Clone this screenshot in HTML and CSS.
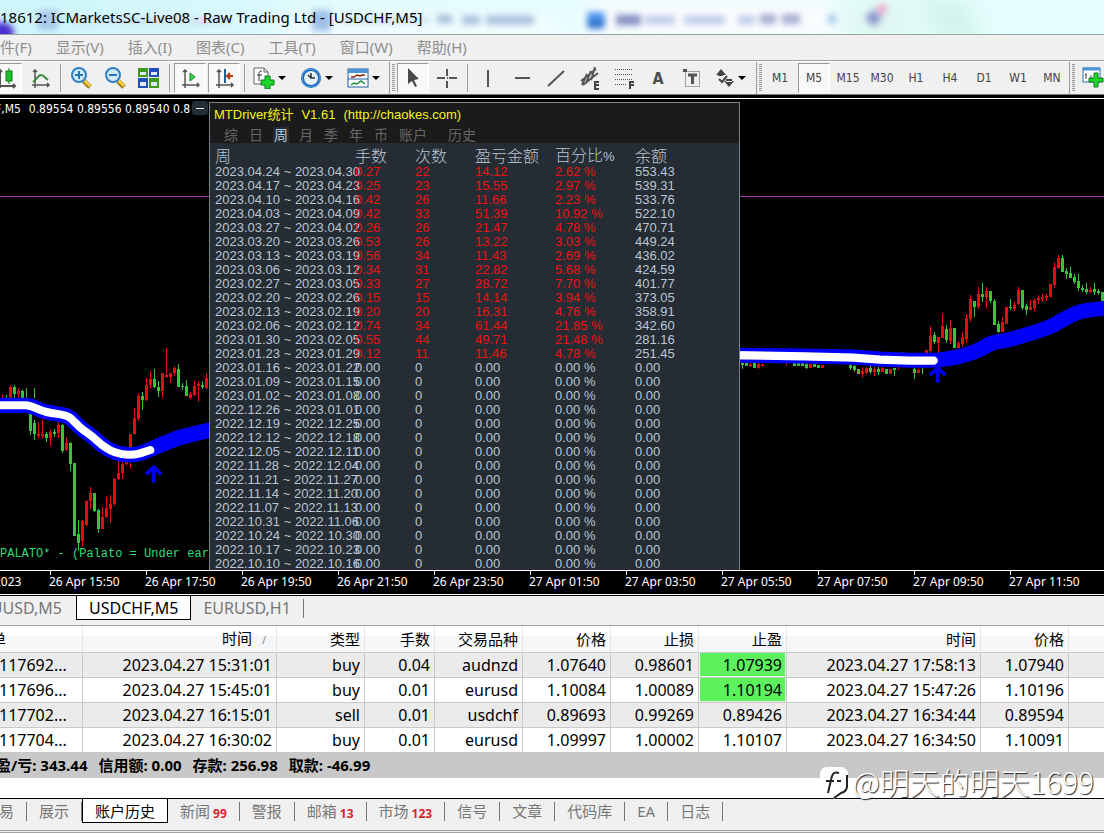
FILE: index.html
```html
<!DOCTYPE html>
<html lang="zh-CN">
<head>
<meta charset="utf-8">
<title>ICMarketsSC-Live08 - [USDCHF,M5]</title>
<link rel="stylesheet" href="styles.css">
</head>
<body>
<header class="titlebar">
  <svg class="titlebar-glass" aria-hidden="true">
    <defs>
      <filter id="soft"><feGaussianBlur stdDeviation="3"/></filter>
      <filter id="softer"><feGaussianBlur stdDeviation="12"/></filter>
    </defs>
    <g filter="url(#softer)">
      <rect x="585" y="0" width="250" height="40" fill="#fdfcfe"/>
      <rect x="850" y="0" width="60" height="40" fill="#dff5f0"/>
      <path d="M915 0H960L985 40H940Z" fill="#d2f0e9"/>
      <rect x="280" y="14" width="290" height="30" fill="#f2fdff"/>
    </g>
    <g filter="url(#soft)">
      <circle cx="2" cy="34" r="12" fill="#4a2fd0"/>
      <rect x="38" y="10" width="20" height="20" fill="#a9c8ec"/>
      <rect x="312" y="10" width="19" height="21" fill="#9dbfe8"/>
      <path d="M70 21H230M340 20H430" stroke="#cbdff0" stroke-width="6"/>
      <path d="M437 19H452M462 20H480M486 20H534" stroke="#a9c0dc" stroke-width="9"/>
      <rect x="587" y="12" width="18" height="17" rx="3" fill="#4c94ee"/>
      <path d="M588 24H604" stroke="#2a5fb4" stroke-width="5"/>
      <path d="M616 20H641" stroke="#8894c4" stroke-width="11"/>
      <path d="M645 20H675M684 20H725M738 20H755" stroke="#c0cdea" stroke-width="9"/>
      <path d="M760 19H776M782 19H800" stroke="#a4aed2" stroke-width="10"/>
      <circle cx="832" cy="19" r="5" fill="#a5cdea"/>
      <path d="M873 9L883 18L873 27L865 18Z" fill="#8c9ad0"/>
      <circle cx="882" cy="9" r="5" fill="#f0a5cc"/>
    </g>
  </svg>
  <h1 class="titlebar-text">18612: ICMarketsSC-Live08 - Raw Trading Ltd - [USDCHF,M5]</h1>
</header>

<nav class="menu">
  <button>件(F)</button><button>显示(V)</button><button>插入(I)</button><button>图表(C)</button><button>工具(T)</button><button>窗口(W)</button><button>帮助(H)</button>
</nav>

<div class="toolbar">
  <div class="group first">
    <button class="tool on" aria-label="蜡烛图"><svg width="22" height="22"><g fill="none" stroke="#555" stroke-width="2"><path d="M5 3V21M2 19H20M3 5L5 3L7 5M18 17L20 19L18 21"/></g><path d="M14 1V17" stroke="#0a6a10" stroke-width="1"/><rect x="11" y="4" width="6" height="10" fill="#19c22c" stroke="#0a7a18"/></svg></button>
    <button class="tool" aria-label="折线图"><svg width="22" height="22"><g fill="none" stroke="#555" stroke-width="1.500"><path d="M6 3V21M3 18H20M4 5L6 3L8 5M18 16L20 18L18 20"/></g><path d="M4 15C8 12 9 8 12 8S16 11 19 13" fill="none" stroke="#3c8a3c" stroke-width="2"/></svg></button>
    <i class="sep"></i>
    <button class="tool" aria-label="放大"><svg width="22" height="22"><path d="M14 14L20 20" stroke="#a07a10" stroke-width="5"/><path d="M14 13L20 19" stroke="#f2cf4a" stroke-width="3"/><circle cx="9" cy="8" r="7" fill="#cfeafa" stroke="#2f7fc4" stroke-width="2"/><path d="M5 8H13M9 4V12" stroke="#2277b4" stroke-width="2"/></svg></button>
    <button class="tool" aria-label="缩小"><svg width="22" height="22"><path d="M14 14L20 20" stroke="#a07a10" stroke-width="5"/><path d="M14 13L20 19" stroke="#f2cf4a" stroke-width="3"/><circle cx="9" cy="8" r="7" fill="#cfeafa" stroke="#2f7fc4" stroke-width="2"/><path d="M5 8H13" stroke="#2277b4" stroke-width="2"/></svg></button>
    <button class="tool" aria-label="平铺窗口"><svg width="22" height="22"><path d="M0 1H10V10H0ZM11 11H21V21H11Z" fill="#3f9a1c"/><path d="M11 1H21V10H11ZM0 11H10V21H0Z" fill="#2350b8"/><path d="M2 5H8V8H2ZM13 5H19V8H13ZM2 15H8V19H2ZM13 15H19V19H13Z" fill="#dfe9fb"/></svg></button>
    <i class="sep"></i>
    <button class="tool on" aria-label="自动滚动"><svg width="22" height="22"><g fill="none" stroke="#555" stroke-width="1.500"><path d="M6 3V21M3 18H20M4 5L6 3L8 5M18 16L20 18L18 20"/></g><path d="M11 6L16 10L11 14Z" fill="#3fd04a" stroke="#148a20"/></svg></button>
    <button class="tool on" aria-label="图表平移"><svg width="22" height="22"><g fill="none" stroke="#555" stroke-width="1.500"><path d="M6 3V21M3 18H20M4 5L6 3L8 5M18 16L20 18L18 20"/></g><path d="M12 2V16" stroke="#1d5f96" stroke-width="2"/><path d="M14 9H20M17 6L14 9L17 12" fill="none" stroke="#b03a10" stroke-width="2"/></svg></button>
    <i class="sep"></i>
    <button class="tool drop" aria-label="指标列表"><svg width="23" height="22"><path d="M1 1H11L15 5V17H1Z" fill="#fff" stroke="#666"/><path d="M11 1V5H15" fill="none" stroke="#666"/><path d="M9 4C6 4 6 5 6 8V14M4 8H9" fill="none" stroke="#333"/><path d="M12 9H17V13H21V18H17V22H12V18H8V13H12Z" fill="#1fd42c" stroke="#0a7d16"/></svg><b class="caret"></b></button>
    <button class="tool drop" aria-label="时间周期"><svg width="23" height="22"><circle cx="11" cy="11" r="10" fill="#1e68b8"/><circle cx="11" cy="11" r="9" fill="none" stroke="#4ea0e4"/><circle cx="11" cy="11" r="7" fill="#e6f3fd"/><path d="M11 6V11H15M11 11L8 8" fill="none" stroke="#333" stroke-width="1.500"/></svg><b class="caret"></b></button>
    <button class="tool drop" aria-label="模板"><svg width="23" height="22"><rect x="1" y="2" width="20" height="18" fill="#fff" stroke="#1f5da0"/><path d="M1 4H21" stroke="#4c94d8" stroke-width="4"/><path d="M1 12H21" stroke="#1f5da0"/><path d="M4 10H7L10 8L13 9L15 8H18" fill="none" stroke="#8a2010" stroke-width="1.500"/><path d="M4 18L7 16L10 17L14 14L18 17" fill="none" stroke="#1b8a3a" stroke-width="1.500"/></svg><b class="caret"></b></button>
  </div>
  <div class="group">
    <i class="grip"></i>
    <button class="tool on" aria-label="光标"><svg width="22" height="22"><path d="M6 1V17L10 14L13 20L15 19L12 13L17 12Z" fill="#4a4a4a"/></svg></button>
    <button class="tool" aria-label="十字准线"><svg width="22" height="22"><path d="M11 2V9M11 14V21M1 11H9M13 11H21M11 11H12" stroke="#555" stroke-width="2"/></svg></button>
    <i class="sep"></i>
    <button class="tool" aria-label="垂直线"><svg width="22" height="22"><path d="M11 3V20" stroke="#555" stroke-width="2"/></svg></button>
    <button class="tool" aria-label="水平线"><svg width="22" height="22"><path d="M4 11H19" stroke="#555" stroke-width="2"/></svg></button>
    <button class="tool" aria-label="趋势线"><svg width="22" height="22"><path d="M3 19L19 4" stroke="#555" stroke-width="2"/></svg></button>
    <button class="tool" aria-label="等距通道"><svg width="22" height="24"><path d="M2 15L17 3M4 19L19 7M3 19L8 8M7 17L12 5M12 14L16 1" stroke="#555" stroke-width="2"/><path d="M20 16H16V23H20M16 19H20" fill="none" stroke="#444" stroke-width="2"/></svg></button>
    <button class="tool" aria-label="斐波纳契"><svg width="22" height="24"><path d="M2 3H20M2 8H20M2 13H20M2 18H14" stroke="#555" stroke-width="1" stroke-dasharray="1 1" transform="translate(0 .5)"/><path d="M21 16H17V23M17 19H21" fill="none" stroke="#444" stroke-width="2"/></svg></button>
    <button class="tool letter">A</button>
    <button class="tool" aria-label="文本标签"><svg width="22" height="22"><rect x="4.500" y="4.500" width="14" height="15" fill="none" stroke="#555" stroke-dasharray="1 1"/><path d="M2 2H6V5H2Z" fill="#555"/><path d="M7 8H16M11.500 8V17" stroke="#555" stroke-width="3"/></svg></button>
    <button class="tool drop" aria-label="箭头"><svg width="22" height="22"><path d="M7 2L12 8H2ZM4 7H9V9H4Z M15 20L20 14H10ZM12 12H18V15H12Z" fill="#444"/><path d="M5 12L8 15L13 9" fill="none" stroke="#444" stroke-width="2"/></svg><b class="caret"></b></button>
  </div>
  <div class="group frames">
    <i class="grip"></i>
    <button class="tool">M1</button><button class="tool on">M5</button><button class="tool">M15</button><button class="tool">M30</button><button class="tool">H1</button><button class="tool">H4</button><button class="tool">D1</button><button class="tool">W1</button><button class="tool">MN</button>
  </div>
  <div class="group last">
    <i class="grip"></i>
    <button class="tool" aria-label="新订单"><svg width="22" height="22"><rect x="1" y="1" width="17" height="14" fill="#fff" stroke="#2a6cb4"/><path d="M1 2H18" stroke="#4c94d8" stroke-width="3"/><path d="M4 6V12M3 8H5M9 8V12" stroke="#456"/><path d="M12 6H16V11H21V15H16V20H12V15H7V11H12Z" fill="#1fd42c" stroke="#0a7d16"/></svg></button>
  </div>
</div>

<main class="chart">
  <div class="plot">
    <svg class="candles" aria-hidden="true">
      <path d="M0 97.500H4000" stroke="#a632a6"/>
      <g transform="translate(0 236) scale(.33333)" fill="none" shape-rendering="crispEdges">
        <g stroke="#3fbf3f">
          <path stroke-width="3" d="M19 180V190M43 150V190M67 165V190M79 160V190M103 160V190M91 237V300M103 255V315M139 290V322M163 282V307M187 268V355M211 320V407M223 383V602M235 555V648M283 474V530M295 523V594M427 171V225M463 102V158M475 137V185M535 88V157M547 145V165M559 135V183M607 137V163"/>
          <path stroke-width="9" d="M43 155V178M67 167V190M91 237V288M103 265V297M139 296V308M163 290V296M187 270V348M211 323V387M223 383V602M235 597V623M283 474V527M295 525V582M427 183V195M463 133V155M475 155V168M535 101V155M547 152V157M559 153V182M607 149V155"/>
        </g>
        <g stroke="#e01010">
          <path stroke-width="3" d="M7 180V190M31 153V190M55 160V190M115 262V310M127 255V310M151 285V333M175 260V308M199 305V347M247 555V637M259 495V573M271 457V523M307 517V582M319 487V549M331 480V564M343 428V512M355 375V435M367 380V432M379 375V393M391 370V398M403 220V300M415 175V257M439 130V197M451 107V160M487 115V185M499 39V128M511 114V143M523 92V122M571 172V193M583 137V184M595 141V200M619 113V163"/>
          <path stroke-width="9" d="M31 155V190M55 168V176M115 297V303M127 297V303M151 291V308M175 270V293M199 323V345M247 558V617M259 497V570M271 474V497M307 545V582M319 519V545M331 506V523M343 432V508M355 414V431M367 387V414M379 378V388M391 297V342M403 250V298M415 183V252M439 150V195M451 132V150M487 115V168M499 120V125M511 114V127M523 99V115M571 178V190M583 153V181M595 147V154M619 129V160"/>
        </g>
      </g>
      <g transform="translate(730 141) scale(.33333)" fill="none" shape-rendering="crispEdges">
        <g stroke="#3fbf3f">
          <path stroke-width="3" d="M37 365V387M193 365V378M229 365V388M361 365V390M373 365V397M421 375V402M445 380V405M493 385V407M553 380V416M577 380V402M613 277V311M649 255V309M673 264V325M733 183V231M757 129V185M781 153V189M793 177V255M805 243V279M841 177V210M877 150V210M889 192V224M997 45V96M1009 84V117M1021 81V114M1033 102V132M1045 102V153M1057 135V156M1069 129V162M1093 129V164M1105 147V165M517 337V342"/>
          <path stroke-width="9" d="M37 370V375M49 370V378M73 368V384M193 370V378M205 370V378M217 370V378M229 373V384M253 372V380M265 374V384M361 375V384M373 378V390M385 387V403M421 385V396M445 388V396M469 388V402M493 385V390M553 387V398M613 285V306M649 267V300M673 264V325M733 183V201M757 162V172M781 153V183M793 183V254M805 252V276M841 200V204M877 150V204M889 198V210M997 54V96M1009 92V101M1021 99V113M1033 111V126M1045 123V144M1057 144V150M1069 147V156M1093 147V156M1105 153V159M1117 156V182"/>
        </g>
        <g stroke="#e01010">
          <path stroke-width="3" d="M61 368V381M85 370V387M170 368V378M397 380V414M409 380V403M433 382V407M457 380V397M505 380V389M565 385V400M601 258V338M625 291V345M637 222V293M661 240V312M685 303V325M697 275V320M709 222V310M721 166V245M745 141V208M769 141V204M817 231V276M853 186V212M865 141V196M901 180V210M913 177V213M925 165V192M937 162V186M949 162V183M973 66V143M985 45V87M1081 141V160"/>
          <path stroke-width="9" d="M61 371V378M85 372V384M97 373V377M241 373V384M277 374V384M397 393V402M409 385V399M433 386V396M457 385V396M481 388V402M565 390V398M589 330V345M601 288V332M625 291V309M637 258V293M661 264V303M685 310V324M697 292V311M709 234V297M721 178V237M745 162V201M769 153V171M817 246V276M829 201V252M853 195V207M865 150V192M901 201V210M913 180V204M925 174V179M937 171V176M949 168V174M961 132V171M973 81V135M985 54V84M1081 150V155"/>
        </g>
      </g>
      <g transform="translate(0 236) scale(.33333)" fill="none" stroke-linejoin="round">
        <path d="M-20 211H80C105 214 110 224 140 231S190 237 205 245S230 271 250 285S275 302 290 316S320 343 345 352S400 360 420 355S510 315 545 306S610 290 660 278" stroke="#0000f8" stroke-width="46"/>
        <path d="M-20 211H80C105 214 110 224 140 231S190 237 205 245S230 271 250 285S275 302 290 316S320 343 345 352S400 360 420 355L451 345" stroke="#fff" stroke-width="24" stroke-linecap="round"/>
        <path d="M461 443V396M438 418L461 396L484 418" stroke="#0000f8" stroke-width="11"/>
      </g>
      <g transform="translate(730 141) scale(.33333)" fill="none" stroke-linejoin="round">
        <path d="M-30 345L225 348L370 351L450 357L540 361H620C660 356 700 350 735 335S775 310 800 306S850 296 890 284S950 266 975 253S1030 216 1070 211S1110 206 1150 203" stroke="#0000f8" stroke-width="45"/>
        <path d="M-30 345L225 349L370 353L450 359L540 362H611" stroke="#fff" stroke-width="25" stroke-linecap="round"/>
        <path d="M623 428V384M600 405L623 384L646 405" stroke="#0000f8" stroke-width="11"/>
      </g>
    </svg>
    <p class="quote"><span>F,M5</span><span>0.89554 0.89556 0.89540 0.8</span></p>
    <p class="palato">PALATO* - (Palato = Under eart</p>
    <button class="minimize" aria-label="最小化"></button>

    <section class="stats">
      <div class="stats-head">
        <h2><span>MTDriver统计</span><span>V1.61</span><span>(http://chaokes.com)</span></h2>
        <nav><button>综</button><button>日</button><button class="on">周</button><button>月</button><button>季</button><button>年</button><button>币</button><button>账户</button><button>历史</button></nav>
      </div>
      <table>
        <colgroup><col class="c-week"><col class="c-60"><col class="c-60"><col class="c-80"><col class="c-80"><col></colgroup>
        <thead><tr><th>周</th><th>手数</th><th>次数</th><th>盈亏金额</th><th>百分比<small>%</small></th><th>余额</th></tr></thead>
        <tbody class="gain">
          <tr><td>2023.04.24 ~ 2023.04.30</td><td>0.27</td><td>22</td><td>14.12</td><td>2.62 %</td><td>553.43</td></tr>
          <tr><td>2023.04.17 ~ 2023.04.23</td><td>0.25</td><td>23</td><td>15.55</td><td>2.97 %</td><td>539.31</td></tr>
          <tr><td>2023.04.10 ~ 2023.04.16</td><td>0.42</td><td>26</td><td>11.66</td><td>2.23 %</td><td>533.76</td></tr>
          <tr><td>2023.04.03 ~ 2023.04.09</td><td>0.42</td><td>33</td><td>51.39</td><td>10.92 %</td><td>522.10</td></tr>
          <tr><td>2023.03.27 ~ 2023.04.02</td><td>0.26</td><td>26</td><td>21.47</td><td>4.78 %</td><td>470.71</td></tr>
          <tr><td>2023.03.20 ~ 2023.03.26</td><td>0.53</td><td>26</td><td>13.22</td><td>3.03 %</td><td>449.24</td></tr>
          <tr><td>2023.03.13 ~ 2023.03.19</td><td>0.56</td><td>34</td><td>11.43</td><td>2.69 %</td><td>436.02</td></tr>
          <tr><td>2023.03.06 ~ 2023.03.12</td><td>0.34</td><td>31</td><td>22.82</td><td>5.68 %</td><td>424.59</td></tr>
          <tr><td>2023.02.27 ~ 2023.03.05</td><td>0.33</td><td>27</td><td>28.72</td><td>7.70 %</td><td>401.77</td></tr>
          <tr><td>2023.02.20 ~ 2023.02.26</td><td>0.15</td><td>15</td><td>14.14</td><td>3.94 %</td><td>373.05</td></tr>
          <tr><td>2023.02.13 ~ 2023.02.19</td><td>0.20</td><td>20</td><td>16.31</td><td>4.76 %</td><td>358.91</td></tr>
          <tr><td>2023.02.06 ~ 2023.02.12</td><td>0.74</td><td>34</td><td>61.44</td><td>21.85 %</td><td>342.60</td></tr>
          <tr><td>2023.01.30 ~ 2023.02.05</td><td>0.55</td><td>44</td><td>49.71</td><td>21.48 %</td><td>281.16</td></tr>
          <tr><td>2023.01.23 ~ 2023.01.29</td><td>0.12</td><td>11</td><td>11.46</td><td>4.78 %</td><td>251.45</td></tr>
        </tbody>
        <tbody>
          <tr><td>2023.01.16 ~ 2023.01.22</td><td>0.00</td><td>0</td><td>0.00</td><td>0.00 %</td><td>0.00</td></tr>
          <tr><td>2023.01.09 ~ 2023.01.15</td><td>0.00</td><td>0</td><td>0.00</td><td>0.00 %</td><td>0.00</td></tr>
          <tr><td>2023.01.02 ~ 2023.01.08</td><td>0.00</td><td>0</td><td>0.00</td><td>0.00 %</td><td>0.00</td></tr>
          <tr><td>2022.12.26 ~ 2023.01.01</td><td>0.00</td><td>0</td><td>0.00</td><td>0.00 %</td><td>0.00</td></tr>
          <tr><td>2022.12.19 ~ 2022.12.25</td><td>0.00</td><td>0</td><td>0.00</td><td>0.00 %</td><td>0.00</td></tr>
          <tr><td>2022.12.12 ~ 2022.12.18</td><td>0.00</td><td>0</td><td>0.00</td><td>0.00 %</td><td>0.00</td></tr>
          <tr><td>2022.12.05 ~ 2022.12.11</td><td>0.00</td><td>0</td><td>0.00</td><td>0.00 %</td><td>0.00</td></tr>
          <tr><td>2022.11.28 ~ 2022.12.04</td><td>0.00</td><td>0</td><td>0.00</td><td>0.00 %</td><td>0.00</td></tr>
          <tr><td>2022.11.21 ~ 2022.11.27</td><td>0.00</td><td>0</td><td>0.00</td><td>0.00 %</td><td>0.00</td></tr>
          <tr><td>2022.11.14 ~ 2022.11.20</td><td>0.00</td><td>0</td><td>0.00</td><td>0.00 %</td><td>0.00</td></tr>
          <tr><td>2022.11.07 ~ 2022.11.13</td><td>0.00</td><td>0</td><td>0.00</td><td>0.00 %</td><td>0.00</td></tr>
          <tr><td>2022.10.31 ~ 2022.11.06</td><td>0.00</td><td>0</td><td>0.00</td><td>0.00 %</td><td>0.00</td></tr>
          <tr><td>2022.10.24 ~ 2022.10.30</td><td>0.00</td><td>0</td><td>0.00</td><td>0.00 %</td><td>0.00</td></tr>
          <tr><td>2022.10.17 ~ 2022.10.23</td><td>0.00</td><td>0</td><td>0.00</td><td>0.00 %</td><td>0.00</td></tr>
          <tr><td>2022.10.10 ~ 2022.10.16</td><td>0.00</td><td>0</td><td>0.00</td><td>0.00 %</td><td>0.00</td></tr>
        </tbody>
      </table>
    </section>
  </div>
  <div class="axis">
    <span class="cut">2023</span><span>26 Apr 15:50</span><span>26 Apr 17:50</span><span>26 Apr 19:50</span><span>26 Apr 21:50</span><span>26 Apr 23:50</span><span>27 Apr 01:50</span><span>27 Apr 03:50</span><span>27 Apr 05:50</span><span>27 Apr 07:50</span><span>27 Apr 09:50</span><span>27 Apr 11:50</span>
  </div>
</main>

<nav class="tabs chart-tabs">
  <button class="tab head">UUSD,M5</button><button class="tab on">USDCHF,M5</button><button class="tab">EURUSD,H1</button>
</nav>

<section class="terminal">
  <table class="history">
    <colgroup><col class="h-id"><col class="h-time"><col class="h-price"><col class="h-lots"><col class="h-price"><col class="h-price"><col class="h-price"><col class="h-price"><col class="h-time"><col class="h-price"><col></colgroup>
    <thead><tr><th class="order">单</th><th class="sorted">时间<span>/</span></th><th>类型</th><th>手数</th><th>交易品种</th><th>价格</th><th>止损</th><th>止盈</th><th>时间</th><th>价格</th><th></th></tr></thead>
    <tbody>
      <tr><td>117692...</td><td>2023.04.27 15:31:01</td><td>buy</td><td>0.04</td><td>audnzd</td><td>1.07640</td><td>0.98601</td><td class="hit">1.07939</td><td>2023.04.27 17:58:13</td><td>1.07940</td><td></td></tr>
      <tr><td>117696...</td><td>2023.04.27 15:45:01</td><td>buy</td><td>0.01</td><td>eurusd</td><td>1.10084</td><td>1.00089</td><td class="hit">1.10194</td><td>2023.04.27 15:47:26</td><td>1.10196</td><td></td></tr>
      <tr><td>117702...</td><td>2023.04.27 16:15:01</td><td>sell</td><td>0.01</td><td>usdchf</td><td>0.89693</td><td>0.99269</td><td>0.89426</td><td>2023.04.27 16:34:44</td><td>0.89594</td><td></td></tr>
      <tr><td>117704...</td><td>2023.04.27 16:30:02</td><td>buy</td><td>0.01</td><td>eurusd</td><td>1.09997</td><td>1.00002</td><td>1.10107</td><td>2023.04.27 16:34:50</td><td>1.10091</td><td></td></tr>
    </tbody>
  </table>
  <p class="summary"><span>盈/亏: 343.44</span><span>信用额: 0.00</span><span>存款: 256.98</span><span>取款: -46.99</span></p>
  <nav class="tabs bottom-tabs">
    <button class="tab head">易</button><button class="tab">展示</button><button class="tab on">账户历史</button><button class="tab">新闻<sub>99</sub></button><button class="tab">警报</button><button class="tab">邮箱<sub>13</sub></button><button class="tab">市场<sub>123</sub></button><button class="tab">信号</button><button class="tab">文章</button><button class="tab">代码库</button><button class="tab">EA</button><button class="tab">日志</button>
  </nav>
  <div class="watermark">
    <svg width="30" height="34" aria-hidden="true"><path d="M8 1H21Q29 1 29 9V21Q29 27 23 28L15 33L13 28H8Q1 27 1 20V9Q1 1 8 1Z" fill="#fff"/><path d="M20 7C14 5 13 9 12 14L9 27M7 15H15" fill="none" stroke="#222" stroke-width="2"/><path d="M18 15H22" stroke="#222" stroke-width="2"/><path d="M28 9V21Q27 26 22 27L15 32" fill="none" stroke="#222" stroke-width="2"/></svg>
    <span>@明天的明天1699</span>
  </div>
</section>
</body>
</html>
```
FILE: styles.css
```css
* { box-sizing: border-box; }

body {
  margin: 0;
  min-height: 100vh;
  display: flex;
  flex-direction: column;
  background: #f0f0f0;
  color: #000;
  font: 16px/24px "Noto Sans", "Noto Sans CJK SC", sans-serif;
  overflow: hidden;
}

h1, h2, p { margin: 0; font-weight: 400; }

button {
  padding: 0;
  border: 0;
  background: none;
  color: inherit;
  font: inherit;
}

/* Title bar */
.titlebar {
  position: relative;
  height: 35px;
  border-bottom: 1px solid #9aa5a5;
  background: linear-gradient(90deg, #cdf5fa, #e2fcfe 40%, #e4fffd);
  overflow: hidden;
}
.titlebar-glass {
  position: absolute;
  inset: 0;
  width: 100%;
  height: 100%;
}
.titlebar-text {
  position: relative;
  font-size: 15px;
  line-height: 35px;
  white-space: nowrap;
}

/* Menu */
.menu {
  display: flex;
  gap: 24px;
  height: 26px;
  border-bottom: 1px solid #a0a0a0;
  color: #8e8e8e;
  font-size: 15px;
  line-height: 25px;
  white-space: nowrap;
}

/* Toolbar */
.toolbar {
  display: flex;
  height: 34px;
  border-top: 1px solid #fff;
  border-bottom: 1px solid #777;
  overflow: hidden;
}
.group {
  flex: none;
  display: flex;
  align-items: center;
  border-right: 1px solid #9a9a9a;
}
.group.last { border: 0; }
.group.first .tool:first-child { margin-left: -10px; }
.tool {
  flex: none;
  display: flex;
  align-items: center;
  justify-content: center;
  width: 32px;
  height: 30px;
  margin: 0 1px;
  border: 1px solid transparent;
}
.tool.on {
  border-color: #9a9a9a #fff #fff #9a9a9a;
  background: #f8f8f8;
}
.tool.drop {
  width: 45px;
  justify-content: flex-start;
  gap: 2px;
  padding-left: 3px;
}
.tool.letter {
  color: #4c4c4c;
  font: bold 16px "DejaVu Sans Condensed", sans-serif;
}
.frames .tool {
  color: #444;
  font: 12px "DejaVu Sans Condensed", sans-serif;
}
.caret {
  border: 4px solid transparent;
  border-top-color: #000;
  border-bottom: 0;
}
.sep {
  flex: none;
  width: 1px;
  height: 28px;
  margin: 0 3px;
  background: #a0a0a0;
}
.grip {
  flex: none;
  width: 3px;
  height: 28px;
  margin: 0 1px 0 2px;
  background: repeating-linear-gradient(#999 0 1px, #f0f0f0 1px 2px);
}

/* Chart */
.chart {
  flex: 1;
  display: flex;
  flex-direction: column;
  padding-top: 3px;
  background: #000;
  color: #fff;
  font: 12px/16px "Noto Sans", sans-serif;
}
.plot {
  position: relative;
  flex: 1;
  min-height: 300px;
  border-top: 1px solid #fff;
  overflow: hidden;
}
.candles {
  position: absolute;
  inset: 0;
  width: 100%;
  height: 100%;
}
.quote {
  position: absolute;
  top: 2px;
  left: -5px;
  display: flex;
  gap: 8px;
  font: 12px/16px "DejaVu Sans Condensed", sans-serif;
  white-space: pre;
}
.palato {
  position: absolute;
  bottom: 8px;
  left: 0;
  color: #2fdc7c;
  font: 12px/16px "Liberation Mono", monospace;
  white-space: nowrap;
}
.minimize {
  position: absolute;
  top: 2px;
  left: 192px;
  width: 16px;
  height: 14px;
  border-radius: 3px;
  background: linear-gradient(#fff, #fff) center / 8px 1px no-repeat #252c33;
}
.axis {
  display: flex;
  height: 25px;
  border-top: 1px solid #fff;
  border-bottom: 1px solid #fff;
  line-height: 22px;
  white-space: nowrap;
  overflow: hidden;
}
.axis span {
  flex: none;
  width: 96px;
  background: linear-gradient(#fff, #fff) 1px 0 / 1px 4px no-repeat;
}
.axis .cut {
  width: 55px;
  margin-left: -6px;
  background: none;
}

/* Statistics window over the chart */
.stats {
  position: absolute;
  top: 3px;
  left: 209px;
  width: 531px;
  border: 1px solid #77828c;
  background: #252c33;
  color: #b9c6d6;
  font: 13px/14px "Liberation Sans", "Noto Sans CJK SC", sans-serif;
}
.stats-head {
  height: 40px;
  background: #1b1b1b;
}
.stats h2 {
  display: flex;
  gap: 8px;
  padding-left: 4px;
  color: #f4f41c;
  font-size: 13px;
  line-height: 24px;
}
.stats nav {
  display: flex;
  gap: 9px;
  padding-left: 13px;
  color: #666;
  font-size: 14px;
  line-height: 16px;
}
.stats nav button {
  height: 16px;
  padding: 0 1px;
  overflow: hidden;
}
.stats nav button:nth-child(n + 8) { margin-right: 10px; }
.stats nav .on {
  background: #252c33;
  color: #b9c6d6;
}
.stats table {
  width: 100%;
  table-layout: fixed;
  border-collapse: collapse;
  margin-left: 5px;
}
.stats th, .stats td {
  height: 14px;
  padding: 0;
  text-align: left;
  font-weight: 400;
  white-space: nowrap;
}
.stats th {
  height: 21px;
  padding-top: 5px;
  font-size: 16px;
  font-weight: 300;
  line-height: 16px;
}
.stats th small { font-size: 13px; }
.c-week { width: 140px; }
.c-60 { width: 60px; }
.c-80 { width: 80px; }
.gain td { color: #ec1212; }
.gain td:first-child, .gain td:last-child { color: inherit; }

/* Tabs */
.tabs {
  display: flex;
  align-items: flex-start;
  border-top: 1px solid #000;
  background: #f0f0f0;
  color: #777;
  white-space: nowrap;
  overflow: hidden;
}
.tab {
  position: relative;
  flex: none;
  display: flex;
  padding: 0 13px 0 12px;
  height: 24px;
  line-height: 24px;
}
.tab::after {
  content: "";
  position: absolute;
  top: 3px;
  right: 0;
  width: 1px;
  height: 19px;
  background: #777;
}
.tab.head { justify-content: flex-end; overflow: hidden; }
.tab.on {
  border: 1px solid #000;
  border-top: 0;
  padding: 0 12px;
  background: #fff;
  color: #000;
}
.tab.on::after { display: none; }
.chart-tabs {
  height: 31px;
  border-bottom: 1px solid #a0a0a0;
}
.chart-tabs .head { width: 76px; padding-right: 14px; }
.chart-tabs .head::after { display: none; }
.bottom-tabs {
  height: 35px;
  border-bottom: 3px double #a0a0a0;
  font-size: 15px;
}
.bottom-tabs .tab { font-size: 15px; }
.bottom-tabs .head { width: 27px; }
.bottom-tabs sub {
  margin-left: 3px;
  padding-top: 3px;
  color: #d8232a;
  font-size: 12px;
  font-weight: 700;
  vertical-align: baseline;
}

/* Terminal */
.terminal {
  position: relative;
  background: #fff;
}
.history {
  width: 100%;
  table-layout: fixed;
  border-collapse: separate;
  border-spacing: 0;
}
.h-id { width: 83px; }
.h-time { width: 194px; }
.h-price { width: 88px; }
.h-lots { width: 70px; }
.history th, .history td {
  height: 25px;
  padding: 0 4px 0 0;
  border-right: 1px solid #c8c8c8;
  border-bottom: 1px solid #c8c8c8;
  text-align: right;
  line-height: 24px;
  white-space: nowrap;
  overflow: hidden;
}
.history th {
  height: 27px;
  border-right-color: #e4e6e8;
  background: linear-gradient(#fff 0 40%, #f5f6f8 40%);
  font-size: 15px;
  font-weight: 400;
}
.history .order {
  text-align: left;
  text-indent: -9px;
}
.history td:first-child { text-align: left; text-indent: -1px; }
.history th:last-child, .history td:last-child { border-right: 0; }
.history tbody tr:nth-child(odd) { background: #ebebeb; }
.history .hit {
  background: #5ef15e;
  box-shadow: inset 1px 0 #fff, inset -1px -1px #e4fbe4;
}
.sorted span {
  margin: 0 6px 0 10px;
  color: #888;
  font-size: 11px;
}
.summary {
  display: flex;
  gap: 11px;
  height: 25px;
  margin-left: -4px;
  margin-bottom: 20px;
  background: #c8c8c8;
  font-size: 15px;
  font-weight: 700;
  line-height: 25px;
  white-space: nowrap;
}
.watermark {
  position: absolute;
  right: 10px;
  bottom: 33px;
  display: flex;
  align-items: center;
  gap: 4px;
  color: #fff;
  font: 300 30px/36px "Noto Sans CJK SC", sans-serif;
  text-shadow: 1px 1px 1px #222;
  white-space: nowrap;
}
.watermark span { margin-top: -4px; }
```
